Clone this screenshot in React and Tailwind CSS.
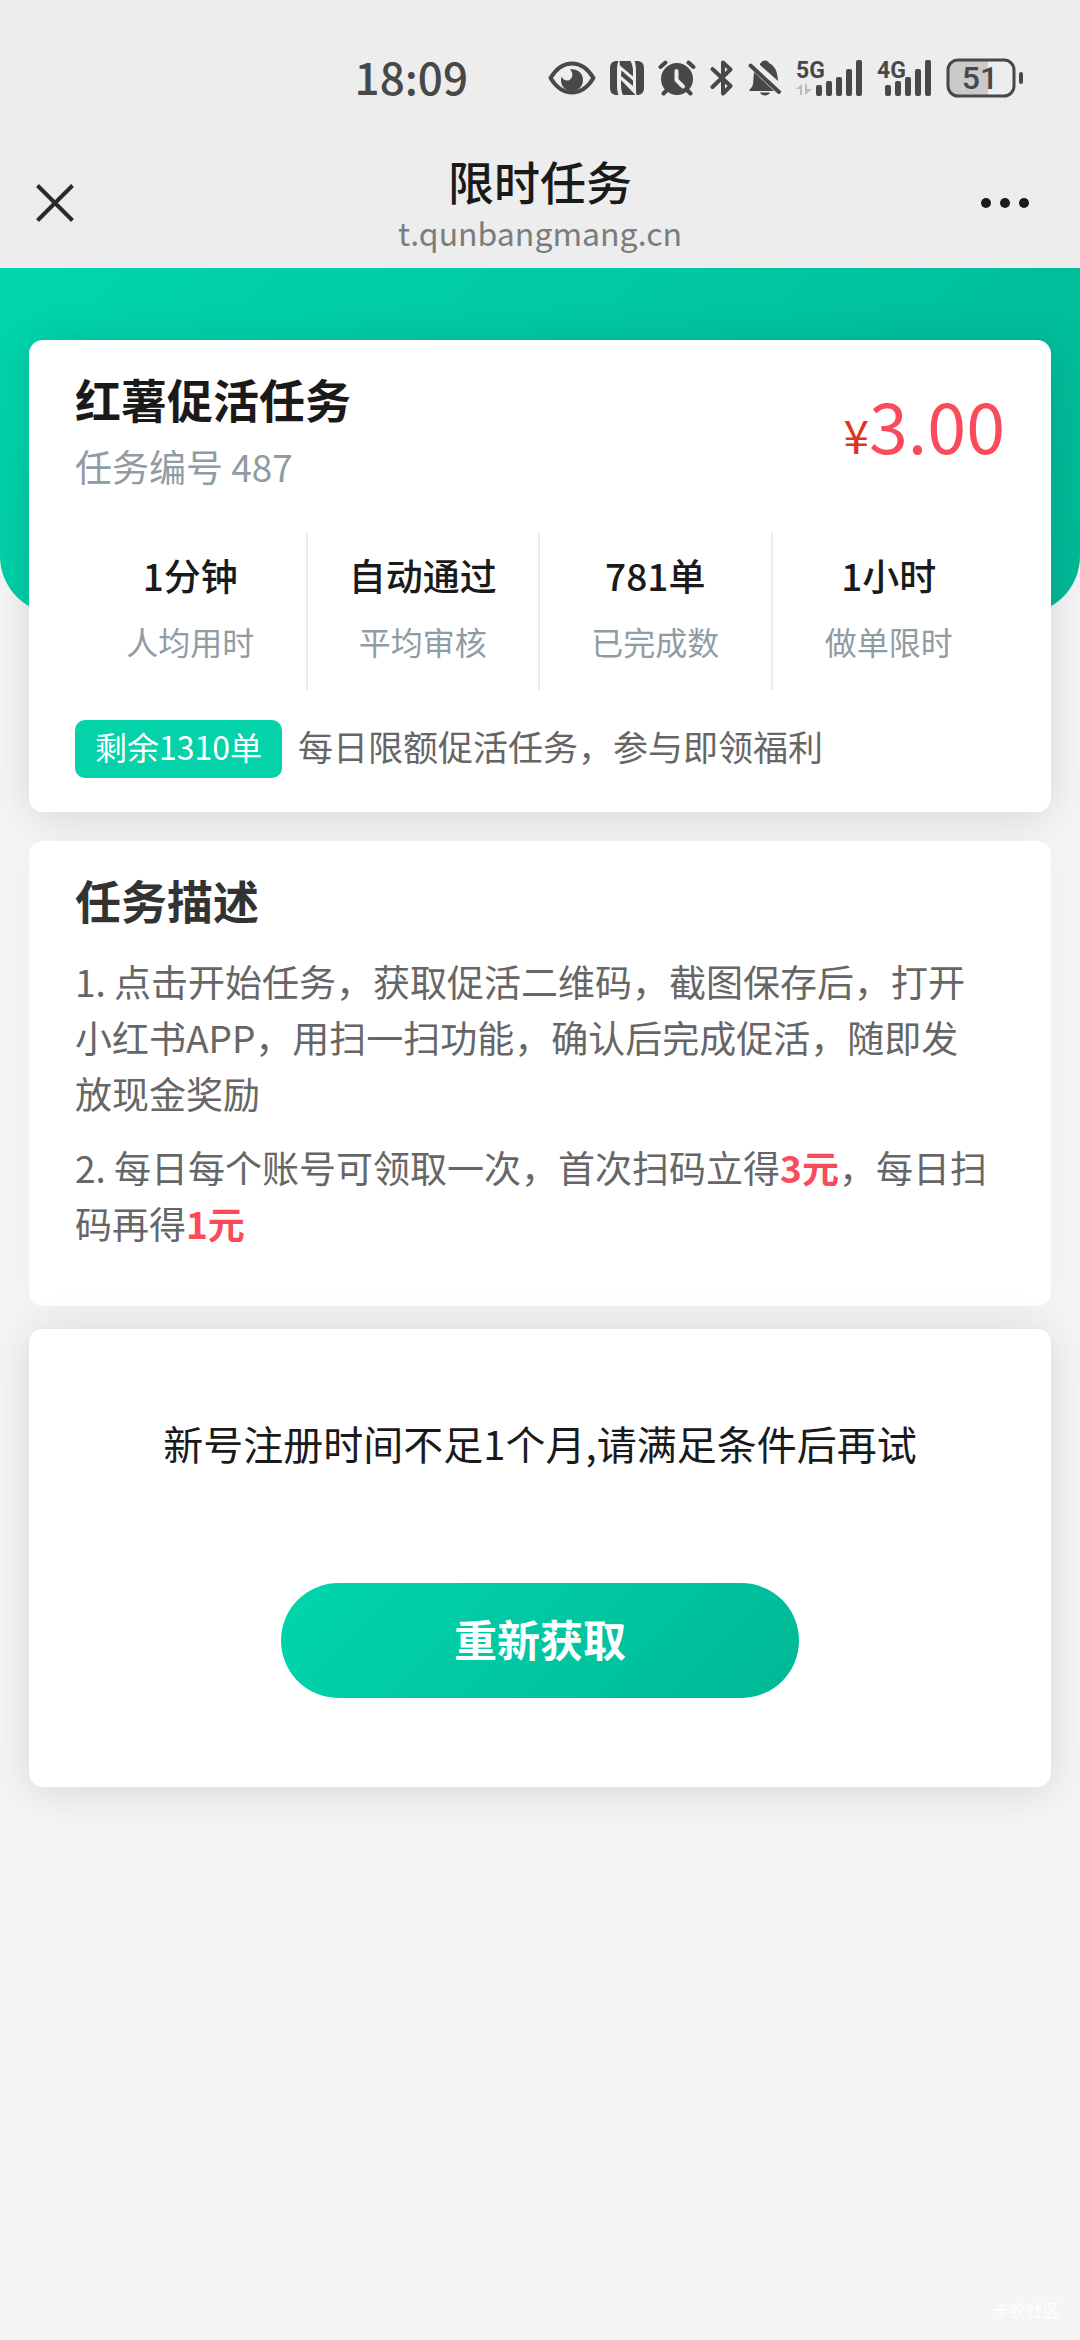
const stats = [
  { value: "1分钟", label: "人均用时" },
  { value: "自动通过", label: "平均审核" },
  { value: "781单", label: "已完成数" },
  { value: "1小时", label: "做单限时" },
];

function EyeIcon() {
  return (
    <svg width="48" height="34" viewBox="0 0 48 34" fill="none">
      <path d="M2.500 17C8 8 15.500 2.500 24 2.500S40 8 45.500 17C40 26 32.500 31.500 24 31.500S8 26 2.500 17Z" stroke="#484848" strokeWidth="4" strokeLinejoin="round" />
      <path d="M22 8.500C29 7.500 35 12 35 19C35 25.500 30 30 24 30S13 25.500 13 19.500C13 18 13.200 16.700 13.700 15.500C15 19 18.500 20.500 21.500 19C25 17 25.500 12 22 8.500Z" fill="#484848" />
    </svg>
  );
}

function NfcIcon() {
  return (
    <svg width="34" height="34" viewBox="0 0 34 34" fill="#484848">
      <path d="M7 0H8.500C7.300 3 7 6 7 10V23C7 28 7.300 31 8.500 34H7C2.500 34 0 31.500 0 27V7C0 2.500 2.500 0 7 0Z" />
      <path d="M27 0H24.500C25.700 3 26 6 26 11V24C26 28 26 31 26.500 34H27C31.500 34 34 31.500 34 27V7C34 2.500 31.500 0 27 0Z" />
      <path d="M9.500 0H20.500C22.500 4 23 7 23 11V15.500L10 4.500Z" />
      <path d="M11.500 9.500L23 19.500V25L11 15Z" />
      <path d="M11 19L25.500 34H13C11 30 11 26 11 19Z" />
    </svg>
  );
}

function AlarmIcon() {
  return (
    <svg width="38" height="36" viewBox="0 0 38 36" fill="none" stroke="#484848" strokeLinecap="round">
      <circle cx="19" cy="19" r="16" fill="#484848" stroke="none" />
      <path d="M2.500 7L7.500 2.500M35.500 7L30.500 2.500M5.500 33.500L9 30M32.500 33.500L29 30" strokeWidth="4" />
      <path d="M18.500 11V20L25 26.500" stroke="#ededed" strokeWidth="4" strokeLinejoin="round" />
    </svg>
  );
}

function BluetoothIcon() {
  return (
    <svg width="24" height="36" viewBox="0 0 24 36" fill="none">
      <path d="M2.500 9L20.500 26L13 33.500V2.500L20.500 9.500L2.500 27" stroke="#484848" strokeWidth="4" strokeLinejoin="round" strokeLinecap="round" />
    </svg>
  );
}

function BellOffIcon() {
  return (
    <svg width="34" height="36" viewBox="0 0 34 36" fill="none">
      <path d="M6 12L26 31H1.500C1 29 4.500 28 5 24Z" fill="#484848" />
      <path d="M12 4C14 -0.500 20 -0.500 21 3C27 6 29.500 11 30 21L12 5Z" fill="#484848" />
      <path d="M12 32.500H22C20.500 36.500 13.500 36.500 12 32.500Z" fill="#484848" />
      <path d="M2.500 5.500L31 32" stroke="#484848" strokeWidth="4" strokeLinecap="round" />
    </svg>
  );
}

function Signal({ name, data }) {
  return (
    <svg width={data ? 67 : 55} height="62" viewBox={data ? "0 -12 67 62" : "0 -12 55 62"}>
      <text x="0" y="19" fontSize="23" fontWeight="700" fill="#484848" fontFamily="Roboto, sans-serif">{name}</text>
      {data && <path d="M0 30L6 25V36H4V30ZM9 25H11V30H16L9 36Z" fill="#bdbdbd" />}
      <g transform={data ? "translate(20 0)" : "translate(8 0)"} fill="#484848">
        <rect x="0" y="26" width="6" height="11" rx="2" />
        <rect x="10" y="22" width="6" height="15" rx="2" />
        <rect x="20" y="18" width="6" height="19" rx="2" />
        <rect x="30" y="10" width="6" height="27" rx="2" />
        <rect x="40" y="1" width="6" height="36" rx="2" />
      </g>
    </svg>
  );
}

function Battery() {
  return (
    <svg width="78" height="60" viewBox="0 -10 78 60">
      <path d="M12 2H42V38H12C5 38 2 34 2 28V12C2 6 5 2 12 2Z" fill="#cacaca" />
      <rect x="2" y="2" width="66" height="36" rx="10" fill="none" stroke="#484848" strokeWidth="3" />
      <rect x="73" y="14" width="4" height="12" rx="2" fill="#484848" />
      <text x="34" y="31" fontSize="32" fontWeight="500" textAnchor="middle" fill="#484848" fontFamily="Roboto, sans-serif">51</text>
    </svg>
  );
}

function StatusBar() {
  return (
    <div className="flex h-[156px] items-center justify-end pr-14">
      <span className="mr-20 pb-1 text-[44px] leading-[48px] font-medium text-[#484848]">18:09</span>
      <div className="flex items-center gap-[14px]">
        <EyeIcon />
        <NfcIcon />
        <AlarmIcon />
        <BluetoothIcon />
        <BellOffIcon />
        <Signal name="5G" data />
        <Signal name="4G" />
        <Battery />
      </div>
    </div>
  );
}

function Card({ className, children }) {
  return <section className={`rounded-[14px] bg-white ${className}`}>{children}</section>;
}

export default function App() {
  return (
    <div className="flex min-h-screen flex-col bg-[#f5f5f5] text-[#1a1a1a]" style={{ fontFamily: "'Noto Sans CJK SC', sans-serif" }}>
      <header className="bg-[#ededed]">
        <StatusBar />
        <div className="grid h-28 grid-cols-[1fr_auto_1fr] items-start px-9">
          <button aria-label="关闭" className="mt-7 justify-self-start">
            <svg width="38" height="38" viewBox="0 0 38 38" stroke="#2a2a2a" strokeWidth="4">
              <path d="M1.500 1.500L36.500 36.500M36.500 1.500L1.500 36.500" />
            </svg>
          </button>
          <div className="text-center">
            <h1 className="text-[46px] leading-[48px] font-medium">限时任务</h1>
            <p className="text-[32px] leading-[56px] text-[#7c7c7c]">t.qunbangmang.cn</p>
          </div>
          <button aria-label="更多" className="mt-7 mr-3.5 justify-self-end">
            <svg width="50" height="38" viewBox="0 0 50 38" fill="#1a1a1a">
              <circle cx="6" cy="19" r="5" />
              <circle cx="25" cy="19" r="5" />
              <circle cx="44" cy="19" r="5" />
            </svg>
          </button>
        </div>
      </header>

      <div className="h-[346px] rounded-b-[58px] bg-[linear-gradient(135deg,#00d6ad,#00b896)]" />

      <main className="relative -mt-[274px] px-[29px]">
        <Card className="px-[46px] pt-7 pb-[34px] shadow-[0_4px_44px_rgba(0,0,0,0.13)]">
          <div className="flex items-start justify-between">
            <div>
              <h2 className="text-[46px] leading-[60px] font-bold">红薯促活任务</h2>
              <p className="mt-2 text-[37px] leading-[60px] text-[#909ca3]">任务编号 487</p>
            </div>
            <p className="pt-[14px] text-[70px] leading-[84px] text-[#fa4b5a]">
              <span className="text-[46px] text-[#dc3522]">¥</span>3.00
            </p>
          </div>

          <div className="mt-[37px] grid grid-cols-4 divide-x-2 divide-[#ebebeb] text-center">
            {stats.map((s) => (
              <div key={s.label} className="h-[157px] pt-3">
                <p className="text-[37px] leading-[60px] font-medium">{s.value}</p>
                <p className="mt-1.5 text-[32px] leading-[60px] text-[#909ca3]">{s.label}</p>
              </div>
            ))}
          </div>

          <div className="mt-[30px] flex items-center gap-4">
            <span className="rounded-[10px] bg-[#04d2a8] px-5 pb-1.5 text-[32px] leading-[52px] text-white">剩余1310单</span>
            <span className="pb-1.5 text-[35px] leading-[52px] text-[#666]">每日限额促活任务，参与即领福利</span>
          </div>
        </Card>

        <Card className="mt-[29px] px-[46px] pt-7 pb-[55px] shadow-[0_4px_44px_rgba(0,0,0,0.03)]">
          <h2 className="text-[46px] leading-[60px] font-bold text-[#333]">任务描述</h2>
          <div className="mt-6 space-y-[18px] pr-3 text-[37px] leading-[56px] text-[#666]">
            <p>1. 点击开始任务，获取促活二维码，截图保存后，打开小红书APP，用扫一扫功能，确认后完成促活，随即发放现金奖励</p>
            <p>
              2. 每日每个账号可领取一次，首次扫码立得<b className="text-[#fa4b5a]">3元</b>，每日扫码再得<b className="text-[#fa4b5a]">1元</b>
            </p>
          </div>
        </Card>

        <Card className="mt-[23px] flex flex-col items-center px-[46px] pt-[84px] pb-[89px] shadow-[0_4px_44px_rgba(0,0,0,0.13)]">
          <p className="text-[40px] leading-[60px]">新号注册时间不足1个月,请满足条件后再试</p>
          <button className="mt-[110px] h-[115px] w-[518px] rounded-full bg-[linear-gradient(135deg,#00d6ad,#00b896)] pb-1 text-[43px] font-bold text-white">
            重新获取
          </button>
        </Card>
      </main>

      <footer className="mt-auto pr-5 pb-4 text-right text-[17px] leading-[28px] text-white">卡农社区</footer>
    </div>
  );
}
